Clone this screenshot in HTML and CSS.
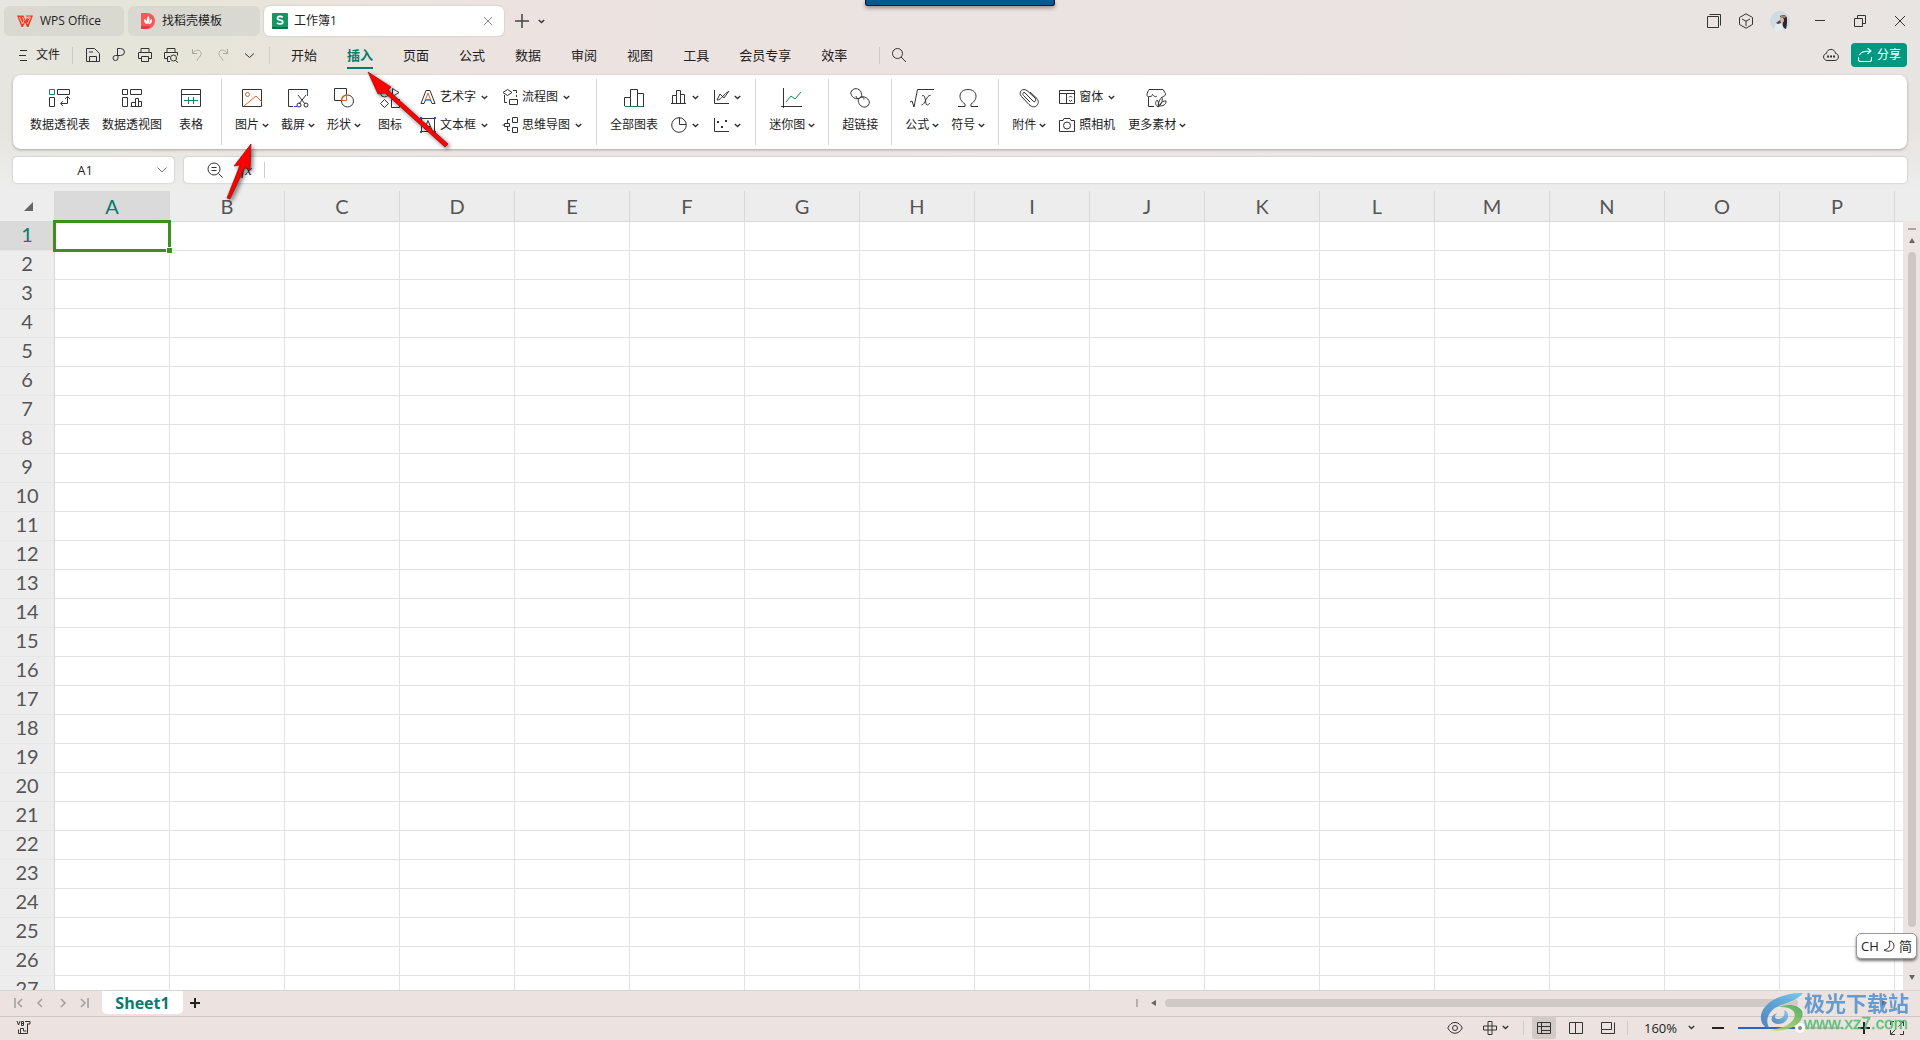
FILE: index.html
```html
<!DOCTYPE html>
<html lang="zh-CN">
<head>
<meta charset="utf-8">
<title>工作簿1 - WPS Office</title>
<link rel="stylesheet" href="styles.css">
</head>
<body>
<svg class="defs" aria-hidden="true">
  <symbol id="chev" viewBox="0 0 7 5"><path d="M.8 1l2.7 2.6L6.2 1" fill="none" stroke="#333" stroke-width="1.4"/></symbol>
</svg>

<header class="titlebar">
  <button class="tab tab-home"><svg width="16" height="12" viewBox="0 0 16 12"><path d="M0 .5h6.5l2 5 1.5-3-1-2H16L11.5 12H10L8 7.500 6 12H4.500z" fill="#f03a24"/><path d="M2.500 2l3 7L7 5.500 5.500 2M10.500 9l3-7h-3l1 2" fill="none" stroke="#ffd9cf" stroke-width=".9"/></svg><span>WPS Office</span></button>
  <button class="tab tab-docer"><svg width="14" height="16" viewBox="0 0 14 16"><path d="M0 0h6a8 8 0 010 16H0z" fill="#f25a5a"/><path d="M0 13h9l-2 3H0z" fill="#d93d46"/><path d="M7 3c2 2 2 4 .5 8C5 10 5.500 6 7 3zM3 6c2 .5 3 2 3.500 5C4 11 3 9 3 6zM11 6c-1.500.5-2.500 2-3 5 2.500 0 3-2 3-5z" fill="#fff"/></svg><span>找稻壳模板</span></button>
  <div class="tab tab-active"><svg width="16" height="16" viewBox="0 0 16 16"><rect width="16" height="16" rx="1" fill="#149765"/><path d="M0 14h16v1l-1 1H1l-1-1z" fill="#0a6e4a"/><path d="M10.800 4.300C9 2.800 5.500 3 5.500 5.200c0 2.600 5.300 1.300 5.300 3.900 0 2.300-3.800 2.400-5.800.7" fill="none" stroke="#fff" stroke-width="1.700"/></svg><span>工作簿1</span>
    <button class="tab-close" aria-label="关闭"><svg width="10" height="10"><path d="M1 1l8 8M9 1L1 9" fill="none" stroke="#888"/></svg></button></div>
  <button class="plain new-tab" aria-label="新建"><svg width="14" height="14"><path d="M7 0v14M0 7h14" stroke="#444" stroke-width="1.500"/></svg></button>
  <button class="plain" aria-label="标签列表"><svg class="chev"><use href="#chev"/></svg></button>
  <div class="window-tools">
    <button class="plain" aria-label="窗口"><svg class="ic" width="16" height="16"><path d="M1.500 3.500h11v11h-11zM3.500 1.500h11v11"/></svg></button>
    <button class="plain" aria-label="应用"><svg class="ic" width="16" height="16"><path d="M8 .8l6.500 3.700v7L8 15.200 1.500 11.500v-7zM4 6l4 2.200L12 6M8 8v5"/></svg></button>
    <button class="plain" aria-label="账户"><svg width="20" height="20" viewBox="0 0 20 20"><circle cx="10" cy="10" r="10" fill="#cfdae1"/><path d="M4 19c1-6 3-8 7-8l3 7a10 10 0 01-10 1z" fill="#e2edf0"/><path d="M10 5c3-2 7-1 7 3 0 4 0 6-1 10-3-1-4-4-3-7z" fill="#2b2631"/><path d="M10 7c2-2 4 0 4 2s-2 4-4 3z" fill="#dfb3a3"/><path d="M6 12l4-3 1 3-3 1z" fill="#4a4450"/><path d="M11 4l5 1-1 2-4-1z" fill="#a88d6c"/></svg></button>
  </div>
  <div class="window-buttons">
    <button class="plain" aria-label="最小化"><svg class="ic" width="12" height="12"><path d="M1 5.500h10"/></svg></button>
    <button class="plain" aria-label="还原"><svg class="ic" width="12" height="12"><path d="M.5 3.500h8v8h-8zM3.500 3.500v-3h8v8h-3"/></svg></button>
    <button class="plain" aria-label="退出"><svg class="ic" width="12" height="12"><path d="M1 1l10 10M11 1L1 11"/></svg></button>
  </div>
</header>

<nav class="menubar">
  <button class="plain file"><svg class="ic" width="9" height="12"><path d="M1 1.500h7M0 6.500h7M1 11.500h7"/></svg><span>文件</span></button>
  <i class="bar"></i>
  <div class="quick">
    <button class="plain" aria-label="保存"><svg class="ic" width="16" height="16"><path d="M1.500 1.500h8l5 5v8h-13zM4.500 14v-4.500h7V14M4 5h4"/></svg></button>
    <button class="plain" aria-label="输出"><svg class="ic" width="16" height="16"><path d="M6.500 8.500V1.500h3a4 3.500 0 010 7H4.500a2.500 2.500 0 102.500 2.500V9"/></svg></button>
    <button class="plain" aria-label="打印"><svg class="ic" width="16" height="16"><path d="M4 5V1.500h8V5M4 11.500H1.500V5.500h13v6H12M4.500 9.500h7v5h-7z"/></svg></button>
    <button class="plain" aria-label="打印预览"><svg class="ic" width="16" height="16"><path d="M4 5V1.500h8V5M4 11.500H1.500V5.500h13v3M7 14.500H4.500v-5H7"/><circle cx="10.500" cy="11" r="3"/><path d="M12.500 13.500l2.500 2"/></svg></button>
    <button class="plain dim" aria-label="撤销"><svg class="ic" width="16" height="16"><path d="M3.500 2v4.500H8M3.500 6.500C7 1 13 3 12 7.500c-.5 2-3 3.500-4 6"/></svg></button>
    <button class="plain dim" aria-label="恢复"><svg class="ic" width="16" height="16"><path d="M12.500 2v4.500H8M12.500 6.500C9 1 3 3 4 7.500c.5 2 3 3.500 4 6"/></svg></button>
    <button class="plain" aria-label="更多"><svg class="ic" width="16" height="16"><path d="M4 6.500l4.500 4 4.500-4"/></svg></button>
  </div>
  <i class="bar"></i>
  <div class="menus">
    <button class="plain">开始</button><button class="plain current">插入</button><button class="plain">页面</button><button class="plain">公式</button><button class="plain">数据</button><button class="plain">审阅</button><button class="plain">视图</button><button class="plain">工具</button><button class="plain">会员专享</button><button class="plain">效率</button>
  </div>
  <i class="bar"></i>
  <button class="plain search" aria-label="搜索"><svg class="ic" width="16" height="16"><circle cx="6.500" cy="6.500" r="5"/><path d="M10 10l5 5"/></svg></button>
  <button class="plain cloud" aria-label="云"><svg class="ic" width="16" height="14"><path d="M4 12.500C-.5 12-.5 6 3.500 5.500 4 0 12 0 12.500 5.500 16.500 6 16.500 12 12 12.500z"/><path d="M4 8.500h2M7 8.500h2M10 8.500h2" stroke-width="2"/></svg></button>
  <button class="share"><svg width="14" height="14"><path d="M.5 9v2.500a2 2 0 002 2h9a2 2 0 002-2V9M1.500 7c1-3 4-4 11-4M9.500 0l3.500 3-3.500 3" fill="none" stroke="#fff" stroke-width="1.100"/></svg><span>分享</span></button>
</nav>

<section class="ribbon">
  <button class="big"><svg class="ic" width="22" height="20"><path d="M8.500 1.500h12v5h-12zM.5 9.500h5v9h-5zM12 15.500h6.500v-7M14 13l-2.500 2.500L14 18M16 11l2.500-2.500L21 11"/><path class="g" d="M.5 1.500h5v5h-5z"/></svg><span>数据透视表</span></button>
  <button class="big"><svg class="ic" width="22" height="20"><path d="M1.500 1.500h5v5h-5zM9.500 1.500h11v5h-11zM1.500 9.500h5v9h-5zM10.500 18.500v-4h4v4M14.500 18.500v-8h3v8M17.500 13.500h3v5h-11"/></svg><span>数据透视图</span></button>
  <button class="big"><svg class="ic" width="20" height="20"><path d="M.5 1.500h19v17H.5zM.5 6.500h19"/><path class="g" d="M3 12.500h14M7.500 9v7M12.500 9v7"/></svg><span>表格</span></button>
  <i class="bar"></i>
  <button class="big"><svg class="ic" width="20" height="20"><path d="M.5 1.500h19v17H.5z"/><path class="o" d="M2 18l12-10 6 6"/><circle class="o" cx="5.500" cy="6.500" r="2"/></svg><span>图片<svg class="chev"><use href="#chev"/></svg></span></button>
  <button class="big"><svg class="ic" width="20" height="20"><path d="M5 18.500H.5v-17h19V6M10 7l7 9M18 7l-7 9"/><circle cx="11" cy="17" r="2"/><circle cx="18" cy="17" r="2"/><path class="b" d="M6 18.500h3M19.500 4v4"/></svg><span>截屏<svg class="chev"><use href="#chev"/></svg></span></button>
  <button class="big"><svg class="ic" width="20" height="20"><path d="M7 12.500H.5v-12h12v6"/><circle cx="13.500" cy="13" r="6"/><path class="o" d="M7.500 12.500c0-4 2-5.500 5-5.500v5.500z"/></svg><span>形状<svg class="chev"><use href="#chev"/></svg></span></button>
  <button class="big"><svg class="ic" width="20" height="20"><circle cx="4.500" cy="5" r="4"/><path d="M12.500.5l6.500 4-6.500 4zM4.500 11.500l4 4-4 4-4-4zM11.500 11.500h8v8h-8z"/></svg><span>图标</span></button>
  <div class="stack">
    <button class="small"><svg class="ic" width="16" height="16"><path d="M1 14.500L6 1.500h4l5 13h-3L10.500 11h-5L4 14.500z"/><path class="o" d="M5.500 10.500L8 4l2.500 6.500z"/></svg><span>艺术字</span><svg class="chev"><use href="#chev"/></svg></button>
    <button class="small"><svg class="ic" width="16" height="16"><path d="M2 1.500h12M1.500 2v12M14.500 2v12M2 14.500h12M4.500 12L8 3.500l3.500 8.500M6 9.500h4"/><path d="M0 1h2M14 1h2M0 15h2M14 15h2" class="b" stroke-width="2"/></svg><span>文本框</span><svg class="chev"><use href="#chev"/></svg></button>
  </div>
  <div class="stack">
    <button class="small"><svg class="ic" width="16" height="16"><path d="M5.500.5l4.500 3-4.500 3-4.500-3zM7.500 10.500h8v5h-8zM2.500 6v7.500H5M11 1.500h3.500V4M14.500 6v2"/></svg><span>流程图</span><svg class="chev"><use href="#chev"/></svg></button>
    <button class="small"><svg class="ic" width="16" height="16"><path d="M10.500.5h5v5h-5zM10.500 10.500h5v5h-5zM8 2.500H5.500V6M5.500 10v3.500H8M.5 8h2M2.500 6.500h5v3h-5z"/></svg><span>思维导图</span><svg class="chev"><use href="#chev"/></svg></button>
  </div>
  <i class="bar"></i>
  <button class="big"><svg class="ic" width="20" height="20"><path d="M.5 18V9.500h6V18M6.500 9.500v-8h7V18M13.500 5.500h6V19"/><path class="g" d="M1 18.500h18"/></svg><span>全部图表</span></button>
  <div class="stack">
    <button class="small mini" aria-label="柱形图"><svg class="ic" width="16" height="16"><path d="M0 14.500h15M1.500 14V6.500h4V14M5.500 6.500v-5h4V14M9.500 5.500h4V14"/></svg><svg class="chev"><use href="#chev"/></svg></button>
    <button class="small mini" aria-label="饼图"><svg class="ic" width="16" height="16"><circle cx="8" cy="8" r="7.300"/><path d="M8.500.5v7H15"/></svg><svg class="chev"><use href="#chev"/></svg></button>
  </div>
  <div class="stack">
    <button class="small mini" aria-label="折线图"><svg class="ic" width="16" height="16"><path d="M1.500 1v13.500H16M4 11l3-6 4 4 5-7M4 11c5 0 7-7 11-8"/></svg><svg class="chev"><use href="#chev"/></svg></button>
    <button class="small mini" aria-label="散点图"><svg class="ic" width="16" height="16"><path d="M1.500 1v13.500H16"/><path d="M4 5h2M8 10h2M12 4h2" stroke-width="2"/></svg><svg class="chev"><use href="#chev"/></svg></button>
  </div>
  <i class="bar"></i>
  <button class="big"><svg class="ic" width="22" height="20"><path d="M2.500 0v20M0 18.500h21"/><path class="g" d="M5 14l5-6 4 3 6-7"/></svg><span>迷你图<svg class="chev"><use href="#chev"/></svg></span></button>
  <i class="bar"></i>
  <button class="big"><svg class="ic" width="20" height="20"><path d="M9 10.500C4 12-1 6.500 1.500 3 4-.5 9 0 11 4c1.500 3 .5 6-2 6.500-1.500.3-3-.5-3-2.500M11 9c5-1.500 10.500 4 7.500 8-2.500 3.500-7.500 2.500-9.500-1.500C7.500 12.500 8.500 9.500 11 9c2-.4 3 1 3 2.500"/></svg><span>超链接</span></button>
  <i class="bar"></i>
  <button class="big"><svg class="ic" width="24" height="20"><path d="M0 14l2-1 2 6L7.500 1.500H24M12 8c4-3 3 9 5 9 1 0 2-1 3-2M20.500 7.500c-4-1-5 9-9 9.500"/></svg><span>公式<svg class="chev"><use href="#chev"/></svg></span></button>
  <button class="big"><svg class="ic" width="20" height="20"><path d="M0 18.500h7V16C-1 11 1 1.500 10 1.500S21 11 13 16v2.500h7"/></svg><span>符号<svg class="chev"><use href="#chev"/></svg></span></button>
  <i class="bar"></i>
  <button class="big"><svg class="ic" width="20" height="20"><path d="M5 4l9 9c2 2 4-1 2-3L8.500 3C4-1-1.500 4 2.500 8.500l7.500 8c6 6 12-1 8-6L11 4M5 4C3 6 4 7 5 8l6 6"/></svg><span>附件<svg class="chev"><use href="#chev"/></svg></span></button>
  <div class="stack flush">
    <button class="small"><svg class="ic" width="16" height="16"><path d="M.5 1.500h15v13H.5zM.5 4.500h15M7.500 4.500v10M10 8.500L11.500 7 13 8.500M10 11l1.500 1.500L13 11M3 4.500h4"/></svg><span>窗体</span><svg class="chev"><use href="#chev"/></svg></button>
    <button class="small"><svg class="ic" width="16" height="16"><path d="M.5 3.500H4l1-2h6l1 2h3.500v11H.5z"/><circle cx="8" cy="8.500" r="3.500"/></svg><span>照相机</span></button>
  </div>
  <button class="big"><svg class="ic" width="22" height="20"><path d="M8 18.500H2.500V9C0 8 1 5 3 1.500h14l2.500 4c0 2-1 3-3 3M2.500 8.500C5 9 6 8 6.500 6.500 8 9 10 9 11 8M12 19c-3-2-3-5-1-7 2 2 2 5 1 7zM12 19c0-5 2-8 4-10 1 4-1 8-4 10zM13 18c2-4 4-5 7-5 0 4-3 5-7 5z"/></svg><span>更多素材<svg class="chev"><use href="#chev"/></svg></span></button>
</section>

<div class="formula-row">
  <div class="field name-field"><input class="name-input" aria-label="名称框" value="A1"><button class="plain" aria-label="选择名称"><svg class="ic thin" width="10" height="6"><path d="M.5.500L5 5 9.500.500"/></svg></button></div>
  <div class="field formula-field">
    <button class="plain" aria-label="查找"><svg class="ic" width="16" height="16"><circle cx="7" cy="7" r="6"/><path d="M4.500 5.500h5M4.500 8.500h5M11.500 11.500l4 4"/></svg></button>
    <button class="plain fx">fx</button><i class="bar"></i>
    <input class="formula-input" aria-label="编辑栏">
  </div>
</div>

<main class="sheet">
  <div class="grid-clip"><table class="grid"><thead><tr id="cols"></tr></thead><tbody id="rows"></tbody></table></div>
  <div class="vscroll"><i class="split"></i><i class="arrow up"></i><i class="vthumb"></i><i class="arrow down"></i></div>
</main>

<div class="sheetbar">
  <div class="sheet-nav">
    <button class="plain" aria-label="首个"><svg width="9" height="10"><path d="M1 0v10M8 1L4 5l4 4"/></svg></button>
    <button class="plain" aria-label="上一个"><svg width="9" height="10"><path d="M6 1L2 5l4 4"/></svg></button>
    <button class="plain" aria-label="下一个"><svg width="9" height="10"><path d="M3 1l4 4-4 4"/></svg></button>
    <button class="plain" aria-label="末个"><svg width="9" height="10"><path d="M8 0v10M1 1l4 4-4 4"/></svg></button>
  </div>
  <button class="sheet-tab">Sheet1</button>
  <button class="plain" aria-label="新建工作表"><svg width="10" height="10"><path d="M5 0v10M0 5h10" stroke="#222" stroke-width="2"/></svg></button>
  <div class="hscroll"><i class="split-v"></i><i class="arrow left"></i><i class="hthumb"></i><i class="arrow right"></i></div>
</div>

<footer class="status">
  <button class="plain" aria-label="宏"><svg class="ic" width="16" height="14"><path d="M1 0l1.500 4L4 0M5.500.500v4h2v-4h-2M5.500 2.500h2M9 .500h5v2.500h-3M11.500 3v9.500h-9v-4M4.500 12V7.500h3V10h3"/></svg></button>
  <div class="status-right">
    <button class="plain" aria-label="护眼"><svg class="ic" width="16" height="14"><path d="M.800 7C4-.5 12-.5 15.200 7 12 14 4 14 .800 7z"/><circle cx="8" cy="7" r="2.500"/></svg></button>
    <button class="plain reading" aria-label="阅读模式"><svg class="ic" width="14" height="14"><path d="M5 5V.5h4V5M5 9v4.500h4V9M5 5H.5v4H5M9 5h4.500v4H9M5 5h4v4H5z"/></svg><svg class="chev"><use href="#chev"/></svg></button>
    <i class="bar"></i>
    <div class="views">
      <button class="view on" aria-label="普通视图"><svg class="ic" width="14" height="14"><path d="M.5 1.500h13v11H.5zM.5 5.500h13M4.500 1.500v11M4.500 9.500h9"/></svg></button>
      <button class="view" aria-label="页面布局"><svg class="ic" width="14" height="14"><path d="M.5 1.500h13v11H.5zM6.500 1.500v11"/></svg></button>
      <button class="view" aria-label="分页预览"><svg class="ic" width="14" height="14"><path d="M.5 1.500h10v7H.5zM.5 12.500h13v-11M.5 8.500v4"/></svg></button>
    </div>
    <i class="bar"></i>
    <button class="plain zoom">160%<svg class="chev"><use href="#chev"/></svg></button>
    <button class="plain" aria-label="缩小"><svg width="12" height="12"><path d="M0 6h12" stroke="#222" stroke-width="2"/></svg></button>
    <input class="slider" type="range" min="0" max="100" value="60" aria-label="缩放">
    <button class="plain" aria-label="放大"><svg width="12" height="12"><path d="M0 6h12M6 0v12" stroke="#222" stroke-width="2"/></svg></button>
    <button class="plain full" aria-label="全屏"><svg class="ic" width="14" height="14"><path d="M9 .5h4.500V5M13 1L8.500 5.500M5 13.500H.5V9M1 13l4.500-4.500M.5 4V.5H4M13.500 10v3.500H10"/></svg></button>
  </div>
</footer>

<div class="dock"></div>
<div class="ime">CH<svg width="12" height="12"><path d="M6 1c2 5 0 8-5 9 5 3 10 0 10-4 0-3-2-5-5-5z" fill="none" stroke="#333"/></svg>简</div>
<div class="mark">
  <svg width="44" height="40" viewBox="0 0 44 40"><defs><linearGradient id="mb" x1="0" y1="1" x2="1" y2="0"><stop offset="0" stop-color="#3272b8"/><stop offset="1" stop-color="#62c4ec"/></linearGradient><linearGradient id="mg" x1="0" y1="1" x2="1" y2="0"><stop offset="0" stop-color="#d8e04c"/><stop offset="1" stop-color="#35a35c"/></linearGradient></defs><path d="M43 1C25 0 4 9 1 23c-1 7 3 13 9 14-5-7-3-15 5-21 7-5 20-5 28-15z" fill="url(#mb)" opacity=".85"/><path d="M24 18c2 4-1 9-6 9-4 0-4-4 0-6-6 1-9 7-4 10 6 3 14-1 14-7 0-3-1-5-4-6z" fill="url(#mb)" opacity=".8"/><path d="M19 15c10-4 20-2 23 4 3 8-6 16-14 18-7 2-15 2-19 1 10-1 20-4 24-10 5-7-1-14-14-13z" fill="url(#mg)" opacity=".85"/></svg>
  <div><div class="mark-name">极光下载站</div><div class="mark-url">www.xz7.com</div></div>
</div>
<svg class="arrows" width="260" height="150" viewBox="220 60 260 150" aria-hidden="true">
  <g fill="#fe0000" stroke="#8c0f0f" stroke-width=".7">
    <path d="M368 72L391 87l-3 3 60 54-3 3-60-54-7 1z"/>
    <path d="M251 144l-1 26-5-3-15 32-3-1 13-33-6 1z"/>
  </g>
</svg>
<script src="grid.js"></script>
</body>
</html>
```
FILE: styles.css
```css
* { box-sizing: border-box; }
body {
  margin: 0; height: 100vh; display: flex; flex-direction: column; overflow: hidden; position: relative;
  font: 12px/16px "Open Sans", "Noto Sans CJK SC", sans-serif; color: #222;
  background: linear-gradient(#ededed00 130px, #ededed 190px, #ededed 900px, #ededed00 980px),
    linear-gradient(90deg, #e6e5df 0, #e6e5d9 160px, #ece3e0 480px, #ebe3e1 1100px, #e8e4e1);
}
button { font: inherit; color: inherit; border: 0; padding: 0; background: none; white-space: nowrap; }
input { font: inherit; color: inherit; border: 0; padding: 0; background: none; min-width: 0; outline: 0; }
svg { display: block; flex: none; }
.defs { position: absolute; width: 0; height: 0; }
.plain { display: flex; align-items: center; justify-content: center; }
.ic { fill: none; stroke: #333; stroke-width: 1; overflow: visible; }
.thin { stroke: #777; }
.ic .g { stroke: #0f8562; }
.ic .o { stroke: #d4622b; }
.ic .b { stroke: #2a56d8; }
.chev { width: 7px; height: 5px; }
.bar { width: 1px; background: #cfcac7; flex: none; }

.titlebar { display: flex; align-items: center; gap: 4px; height: 40px; padding: 6px 14px 4px 4px; }
.tab { display: flex; align-items: center; height: 30px; border-radius: 6px; background: #d9d8d1; padding: 0 13px; gap: 7px; }
.tab-home { width: 120px; }
.tab-docer { width: 132px; }
.tab-active { width: 240px; background: #fff; box-shadow: 0 0 2px #b8b5ac; padding: 0 8px; gap: 6px; }
.tab-close { margin-left: auto; padding-right: 3px; }
.new-tab { margin: 0 5px 0 7px; }
.window-tools { display: flex; gap: 16px; margin-left: auto; align-items: center; }
.window-buttons { display: flex; gap: 28px; margin-left: 20px; align-items: center; }

.menubar { display: flex; align-items: center; height: 35px; padding: 0 13px 5px 19px; }
.menubar .bar { height: 17px; }
.file { gap: 8px; margin-right: 12px; }
.quick { display: flex; gap: 10px; margin: 0 12px; }
.dim { opacity: .35; }
.menus { display: flex; gap: 30px; margin: 0 32px 0 21px; font-size: 13px; line-height: 20px; }
.menus .plain { height: 28px; border: solid transparent; border-width: 2px 0; }
.menus .current { color: #067a6c; font-weight: 700; border-bottom-color: #067a6c; }
.search { margin-left: 11px; }
.cloud { margin-left: auto; margin-right: 12px; }
.share { display: flex; align-items: center; gap: 5px; height: 24px; padding: 0 6px 0 7px; border-radius: 4px; background: #009783; color: #fff; }

.ribbon { display: flex; gap: 12px; height: 74px; margin: 0 13px 8px; padding: 4px 17px; background: #fff; border-radius: 8px; box-shadow: 0 1px 3px #a9a5a2; }
.ribbon .bar { background: #d6d6d6; margin: 0 1px; }
.big { display: flex; flex-direction: column; align-items: center; gap: 9px; padding-top: 9px; min-width: 34px; }
.big span { display: flex; align-items: center; gap: 3px; }
.stack { display: flex; flex-direction: column; gap: 12px; padding-top: 10px; margin: 0 1px; }
.small { display: flex; align-items: center; height: 16px; gap: 4px; }
.small .chev { margin-left: 1px; }

.formula-row { display: flex; gap: 10px; margin: 0 13px 8px; }
.field { display: flex; align-items: center; height: 26px; background: #fff; border-radius: 4px; box-shadow: 0 0 2px #aaa; }
.name-field { width: 161px; padding: 0 7px 0 0; }
.name-input { flex: 1; text-align: center; font-size: 13px; }
.formula-field { flex: 1; padding-left: 23px; }
.fx { margin: 0 12px 0 18px; font: italic 15px/16px "Liberation Serif", serif; }
.formula-field .bar { height: 16px; background: #ccc; }
.formula-input { flex: 1; }

.sheet { flex: 1; min-height: 0; display: flex; }
.grid-clip { flex: 1; min-width: 0; overflow: hidden; }
.grid { border-collapse: separate; border-spacing: 0; table-layout: fixed; width: 2010px; font: 20px/24px Lato, sans-serif; color: #555; }
.grid th, .grid td { width: 115px; height: 29px; padding: 0; border: solid #e2e2e2; border-width: 0 1px 1px 0; }
.grid th { font-weight: 400; background: #ededed; border-color: #d8d8d8; text-align: center; padding-bottom: 4px; }
.grid thead th { height: 31px; padding-bottom: 1px; }
.grid th:first-child { width: 55px; }
.grid td { background: #fff; }
.grid tbody th { border-bottom-color: #e6e6e6; }
.grid .hot { background: #dadada; color: #067a6c; }
.corner svg { margin: 1px 0 0 24px; }
.cell { position: relative; }
.cell::before { content: ""; position: absolute; inset: -2px; border: 3px solid #3f8f20; }
.cell::after { content: ""; position: absolute; right: -3px; bottom: -3px; width: 5px; height: 5px; background: #3f8f20; outline: 1px solid #fff; }

.vscroll { width: 17px; margin-top: 30px; padding: 7px 4px 7px 5px; background: #ece5e3; display: flex; flex-direction: column; align-items: center; }
.split { width: 8px; height: 2px; background: #aaa5a3; flex: none; }
.arrow { border: 3px solid transparent; flex: none; }
.up { border-bottom: 5px solid #666; margin-top: 5px; }
.down { border-top: 5px solid #666; margin-top: 48px; }
.vthumb { flex: 1; width: 8px; margin-top: 9px; border-radius: 4px; background: #cdc7c5; }

.sheetbar { display: flex; height: 27px; padding-bottom: 2px; border-top: 1px solid #d9d4d2; border-bottom: 1px solid #cfc6c4; background: #ece3e0; }
.sheet-nav { display: flex; align-items: center; gap: 13px; width: 102px; padding-left: 14px; }
.sheet-nav svg { fill: none; stroke: #a5a09e; stroke-width: 1.6; }
.sheet-tab { height: 23px; width: 81px; margin-right: 7px; background: #fff; border-radius: 0 0 5px 5px; font-size: 16px; font-weight: 700; color: #067a6c; line-height: 20px; }
.hscroll { width: 41%; margin-left: auto; padding-right: 30px; display: flex; align-items: center; }
.split-v { width: 2px; height: 8px; margin-left: 3px; background: #b5afad; }
.left { border-right: 5px solid #666; margin: 0 9px 0 10px; }
.right { border-left: 5px solid #666; margin-left: 84px; }
.hthumb { flex: 1; height: 8px; border-radius: 4px; background: #d0c9c6; }

.status { display: flex; justify-content: space-between; height: 23px; padding: 0 16px 2px; background: #ece3e0; }
.status-right { display: flex; align-items: center; }
.status-right .bar { height: 14px; }
.reading { gap: 5px; margin: 0 14px 0 20px; }
.views { display: flex; gap: 8px; margin: 0 7px 0 8px; }
.view { width: 24px; height: 23px; display: grid; place-items: center; border-radius: 3px; }
.on { background: #d2cac7; }
.zoom { gap: 11px; margin: 0 17px 0 16px; font-size: 13px; }
.full { margin-left: 20px; }
.slider { appearance: none; width: 105px; height: 10px; margin: 0 15px 0 14px; background: linear-gradient(90deg, #2a63c8 60%, #bdb5b2 60%) center / 100% 2px no-repeat; }
.slider::-webkit-slider-thumb { appearance: none; width: 10px; height: 10px; border: 3px solid #fff; border-radius: 5px; background: #888; }

.dock { position: absolute; top: 0; left: calc(45% + 1px); width: 190px; height: 6px; background: #005a92; border: solid #001523; border-width: 0 1px 1px; border-radius: 0 0 3px 3px; box-shadow: 0 2px 4px #0006; }
.ime { position: absolute; right: 3px; bottom: 81px; width: 61px; height: 26px; display: flex; align-items: center; justify-content: center; gap: 4px; background: #fff; border: 1px solid #999; border-radius: 5px; box-shadow: 0 2px 3px #0008; font-size: 13px; }
.mark { position: absolute; right: 11px; bottom: 6px; display: flex; align-items: center; pointer-events: none; }
.mark-name { font: 700 21px/24px "Noto Sans CJK SC", sans-serif; color: #4f8fd0; opacity: .85; }
.mark-url { font: 17px/20px "Liberation Sans", sans-serif; color: #45b868; opacity: .9; -webkit-text-stroke: 1px #5ec27c80; }
.arrows { position: absolute; left: 220px; top: 60px; filter: drop-shadow(2px 2px 2px #0008); pointer-events: none; }
```
FILE: grid.js
```js
const letters = 'ABCDEFGHIJKLMNOP'.split('');
document.getElementById('cols').innerHTML =
  '<th class="corner"><svg width="9" height="9"><path d="M9 0v9H0z" fill="#666"/></svg></th>' +
  letters.map((c, i) => `<th${i ? '' : ' class="hot"'}>${c}</th>`).join('') + '<th></th>';
let html = '';
for (let r = 1; r <= 27; r++) {
  html += `<tr><th${r === 1 ? ' class="hot"' : ''}>${r}</th>`;
  for (let c = 0; c <= letters.length; c++) html += r === 1 && c === 0 ? '<td class="cell"></td>' : '<td></td>';
  html += '</tr>';
}
document.getElementById('rows').innerHTML = html;
```
